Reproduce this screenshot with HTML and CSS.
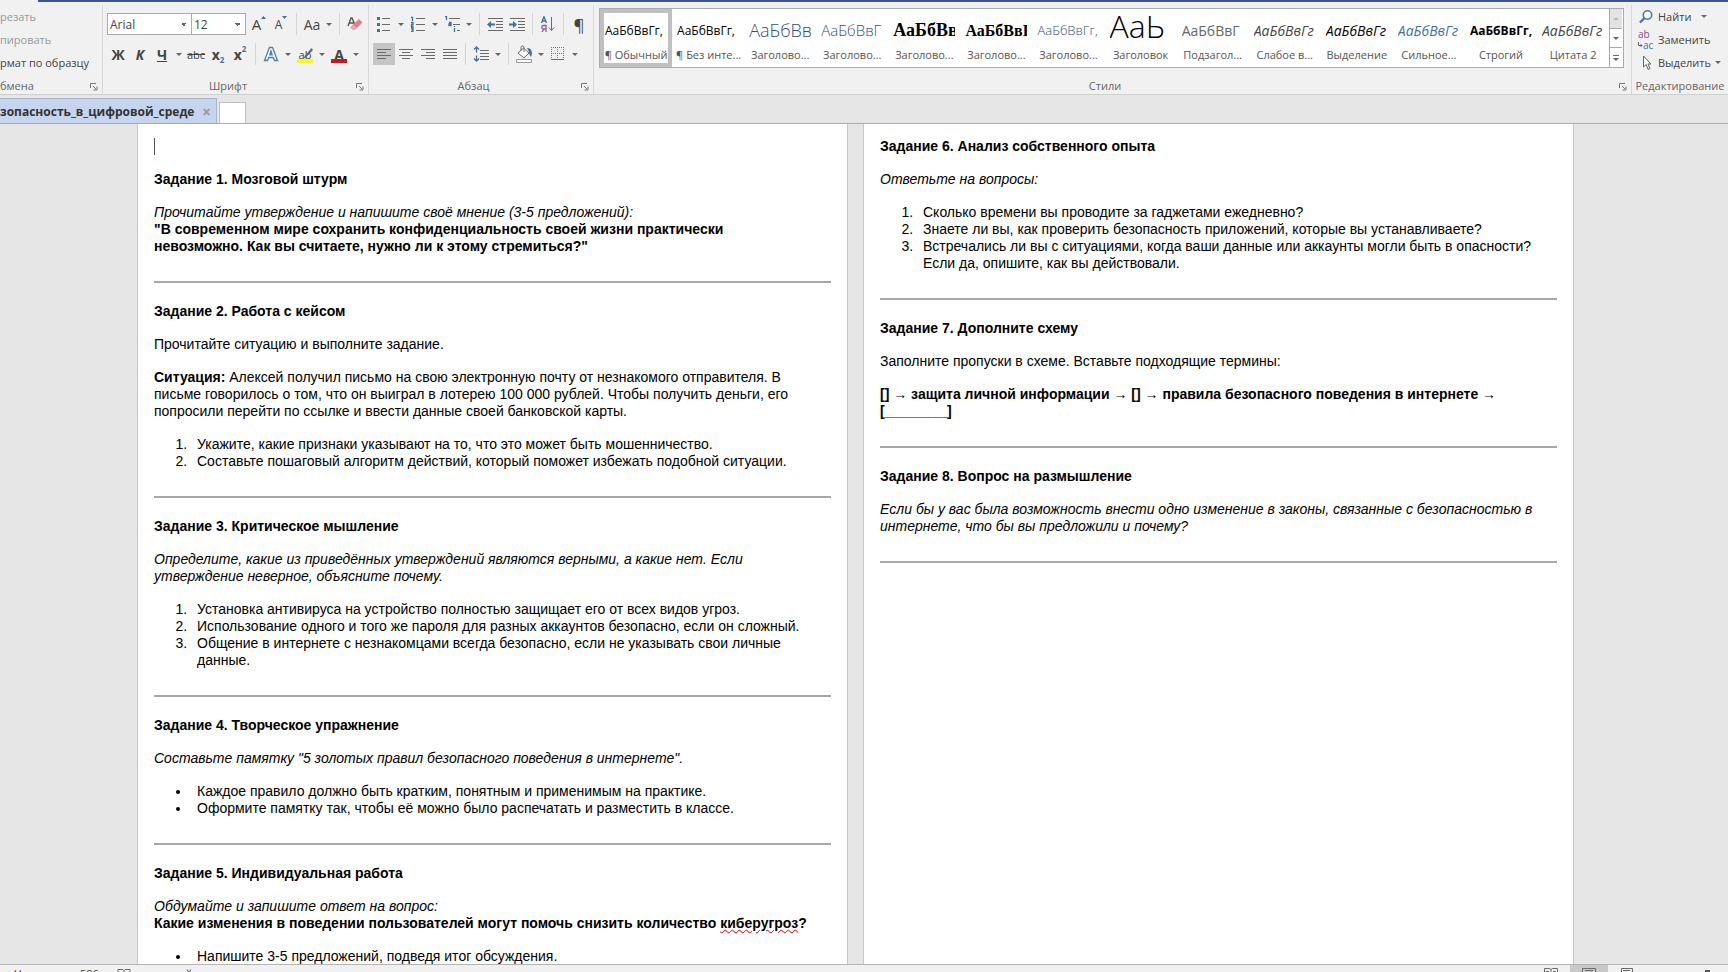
FILE: index.html
```html
<!DOCTYPE html>
<html lang="ru">
<head>
    <meta charset="UTF-8">
    <meta name="viewport" content="width=device-width, initial-scale=1.0">
    <title>Безопасность в цифровой среде</title>
    <link rel="stylesheet" href="styles.css">
</head>
<body>
    <div class="title-edge"></div>

    <header class="ribbon">
        <section class="group clipboard">
            <div class="stack">
                <button class="cmd disabled" disabled>резать</button>
                <button class="cmd disabled" disabled>пировать</button>
                <button class="cmd">рмат по образцу</button>
            </div>
            <div class="group-name left">бмена</div>
            <button class="launcher" aria-label="Буфер обмена"><svg width="8" height="8" viewBox="0 0 8 8"><path d="M.5 5V.5H6M3 3l3 3M7 3.500V7H3.500" /></svg></button>
        </section>

        <section class="group font">
            <div class="rows">
                <div class="row">
                    <select class="pick name" aria-label="Шрифт"><option>Arial</option></select>
                    <select class="pick size" aria-label="Размер"><option>12</option></select>
                    <button class="tool grow" aria-label="Увеличить размер">A<svg width="5" height="3" viewBox="0 0 5 3"><path class="blue-fill" d="M0 3L2.500 0 5 3z" /></svg></button>
                    <button class="tool shrink" aria-label="Уменьшить размер">A<svg width="5" height="3" viewBox="0 0 5 3"><path class="blue-fill" d="M0 0h5L2.500 3z" /></svg></button>
                    <span class="sep"></span>
                    <button class="tool">Aa</button>
                    <button class="arrow" aria-label="Регистр"></button>
                    <span class="sep"></span>
                    <button class="tool" aria-label="Удалить форматирование"><svg width="16" height="16" viewBox="0 0 16 16"><path d="M1 10L4 2h1l3 7M2.500 7h4" fill="none" stroke="#555" stroke-width="1.400" /><path d="M12 3l3.500 3.500-6 6L5.500 9z" fill="#e07f95" /><path d="M5.500 9l4 3.500L8 14H5.500L3 11.500z" fill="#eba5b4" /></svg></button>
                </div>
                <div class="row">
                    <button class="tool strong">Ж</button>
                    <button class="tool strong slant">К</button>
                    <button class="tool strong under">Ч</button>
                    <button class="arrow" aria-label="Подчёркивание"></button>
                    <button class="tool strike">abc</button>
                    <button class="tool strong index">x<sub>2</sub></button>
                    <button class="tool strong index">x<sup>2</sup></button>
                    <span class="sep"></span>
                    <button class="tool" aria-label="Текстовые эффекты"><svg width="16" height="16" viewBox="0 0 16 16"><path d="M1.500 14.500L6.500 1.500h3l5 13h-3l-1.200-3H5.700l-1.200 3zM6.800 8.800h2.400L8 5z" fill="#fff" stroke="#4a7fb5" stroke-width="1.300" /></svg></button>
                    <button class="arrow" aria-label="Эффекты"></button>
                    <button class="tool mark">ab<svg width="16" height="16" viewBox="0 0 16 16"><path d="M0 12h16v4H0z" fill="#fbf528" /><path d="M14.500 1L8 8.500 6 12l3.500-2L16 3z" fill="#6a6a6a" /></svg></button>
                    <button class="arrow" aria-label="Цвет выделения"></button>
                    <button class="tool strong ink">A</button>
                    <button class="arrow" aria-label="Цвет текста"></button>
                </div>
            </div>
            <div class="group-name">Шрифт</div>
            <button class="launcher" aria-label="Параметры шрифта"><svg width="8" height="8" viewBox="0 0 8 8"><path d="M.5 5V.5H6M3 3l3 3M7 3.500V7H3.500" /></svg></button>
        </section>

        <section class="group paragraph">
            <div class="rows">
                <div class="row">
                    <button class="tool" aria-label="Маркеры"><svg width="16" height="16" viewBox="0 0 16 16"><path class="line" d="M6 2.500h8M6 8.500h8M6 14.500h8" /><path class="blue-fill" d="M1 1h3v3H1zM1 7h3v3H1zM1 13h3v3H1z" /></svg></button>
                    <button class="arrow" aria-label="Вид маркеров"></button>
                    <button class="tool" aria-label="Нумерация"><svg width="16" height="16" viewBox="0 0 16 16"><path class="line" d="M6 2.500h9M6 8.500h9M6 14.500h9" /><path class="blue" d="M1 1.500h1.500V5M1 6.500h2v2H1.500v2H3.500M1 12h2v3.500H1M1.500 13.500H3" /></svg></button>
                    <button class="arrow" aria-label="Вид нумерации"></button>
                    <button class="tool" aria-label="Многоуровневый список"><svg width="16" height="16" viewBox="0 0 16 16"><path class="line" d="M5 2.500h11M9 8.500h7M13 14.500h3" /><path class="blue" d="M1 .5h1.500V4M5 6.500h2v3H5v-1.500h2M10.500 12v4M10.500 10v1" /></svg></button>
                    <button class="arrow" aria-label="Вид списка"></button>
                    <span class="sep"></span>
                    <button class="tool" aria-label="Уменьшить отступ"><svg width="16" height="16" viewBox="0 0 16 16"><path class="line" d="M1 2.500h15M9 5.500h7M9 8.500h7M9 11.500h7M1 14.500h15" /><path class="blue-fill" d="M0 8.500L4 5v2.500h4v2H4V12z" /></svg></button>
                    <button class="tool" aria-label="Увеличить отступ"><svg width="16" height="16" viewBox="0 0 16 16"><path class="line" d="M1 2.500h15M9 5.500h7M9 8.500h7M9 11.500h7M1 14.500h15" /><path class="blue-fill" d="M8 8.500L4 5v2.500H0v2h4V12z" /></svg></button>
                    <span class="sep"></span>
                    <button class="tool" aria-label="Сортировка"><svg width="16" height="16" viewBox="0 0 16 16"><path class="blue" d="M1.500 7L4 .5 6.500 7M2.500 5h3" /><path d="M6 16V9.500H3.500a1.500 1.500 0 000 3.500H6M4 13l-2 3" fill="none" stroke="#8d5ba0" stroke-width="1.300" /><path class="line" d="M11.500 1v13M9 11.500l2.500 3 2.500-3" /></svg></button>
                    <span class="sep"></span>
                    <button class="tool pilcrow">¶</button>
                </div>
                <div class="row">
                    <button class="tool on" aria-label="По левому краю"><svg width="16" height="16" viewBox="0 0 16 16"><path class="line" d="M1 3.500h14M1 6.500h9M1 9.500h14M1 12.500h9" /></svg></button>
                    <button class="tool" aria-label="По центру"><svg width="16" height="16" viewBox="0 0 16 16"><path class="line" d="M1 3.500h14M4 6.500h8M1 9.500h14M4 12.500h8" /></svg></button>
                    <button class="tool" aria-label="По правому краю"><svg width="16" height="16" viewBox="0 0 16 16"><path class="line" d="M1 3.500h14M6 6.500h9M1 9.500h14M6 12.500h9" /></svg></button>
                    <button class="tool" aria-label="По ширине"><svg width="16" height="16" viewBox="0 0 16 16"><path class="line" d="M1 3.500h14M1 6.500h14M1 9.500h14M1 12.500h14" /></svg></button>
                    <span class="sep"></span>
                    <button class="tool" aria-label="Интервал"><svg width="16" height="16" viewBox="0 0 16 16"><path class="line" d="M7 4.500h9M7 7.500h9M7 10.500h9M7 13.500h9" /><path class="blue" d="M3.500 1v5.500M1 3.500L3.500 1 6 3.500M3.500 9.500V15M1 12.500L3.500 15 6 12.500" /></svg></button>
                    <button class="arrow" aria-label="Выбор интервала"></button>
                    <span class="sep"></span>
                    <button class="tool" aria-label="Заливка"><svg width="18" height="18" viewBox="0 0 18 18"><path d="M3 8l5.500-5L14 8l-5 5z" fill="#fff" stroke="#666" /><path class="line" d="M6 6V2.500a1.500 1.500 0 013 0V7" /><path class="blue-fill" d="M12 3c5 0 6 5 4 9-1-1-2-3-2-5z" /><path d="M1.500 14.500h15v3h-15z" fill="#fff" stroke="#999" /></svg></button>
                    <button class="arrow" aria-label="Цвет заливки"></button>
                    <button class="tool" aria-label="Границы"><svg width="14" height="14" viewBox="0 0 14 14"><path d="M.5 0v13M6.500 0v13M12.500 0v13M0 .5h13M0 6.500h13" fill="none" stroke="#777" stroke-dasharray="1 1" /><path class="line" d="M0 12.500h13" /></svg></button>
                    <button class="arrow" aria-label="Вид границ"></button>
                </div>
            </div>
            <div class="group-name">Абзац</div>
            <button class="launcher" aria-label="Параметры абзаца"><svg width="8" height="8" viewBox="0 0 8 8"><path d="M.5 5V.5H6M3 3l3 3M7 3.500V7H3.500" /></svg></button>
        </section>

        <section class="group styles">
            <div class="gallery">
                <button class="style chosen"><span class="sample">АаБбВвГг,</span><span class="caption">¶ Обычный</span></button>
                <button class="style"><span class="sample">АаБбВвГг,</span><span class="caption">¶ Без инте...</span></button>
                <button class="style"><span class="sample h1">АаБбВв</span><span class="caption">Заголово...</span></button>
                <button class="style"><span class="sample h2">АаБбВвГ</span><span class="caption">Заголово...</span></button>
                <button class="style"><span class="sample h3">АаБбВв</span><span class="caption">Заголово...</span></button>
                <button class="style"><span class="sample h4">АаБбВвГ</span><span class="caption">Заголово...</span></button>
                <button class="style"><span class="sample h5">АаБбВвГг,</span><span class="caption">Заголово...</span></button>
                <button class="style"><span class="sample title">АаЬ</span><span class="caption">Заголовок</span></button>
                <button class="style"><span class="sample subtitle">АаБбВвГ</span><span class="caption">Подзагол...</span></button>
                <button class="style"><span class="sample weak">АаБбВвГг</span><span class="caption">Слабое в...</span></button>
                <button class="style"><span class="sample accent">АаБбВвГг</span><span class="caption">Выделение</span></button>
                <button class="style"><span class="sample intense">АаБбВвГг</span><span class="caption">Сильное...</span></button>
                <button class="style"><span class="sample strong">АаБбВвГг,</span><span class="caption">Строгий</span></button>
                <button class="style"><span class="sample weak">АаБбВвГг</span><span class="caption">Цитата 2</span></button>
                <div class="scroller">
                    <button class="arrow up" aria-label="Вверх"></button>
                    <button class="arrow" aria-label="Вниз"></button>
                    <button class="arrow more" aria-label="Все стили"></button>
                </div>
            </div>
            <div class="group-name">Стили</div>
            <button class="launcher" aria-label="Окно стилей"><svg width="8" height="8" viewBox="0 0 8 8"><path d="M.5 5V.5H6M3 3l3 3M7 3.500V7H3.500" /></svg></button>
        </section>

        <section class="group editing">
            <div class="stack">
                <button class="cmd"><svg width="16" height="16" viewBox="0 0 16 16"><circle cx="9.500" cy="6" r="4.200" fill="#fff" stroke="#4a78a8" stroke-width="1.600" /><path d="M6.500 9L2 13.500" stroke="#4a78a8" stroke-width="2.400" /></svg>Найти<span class="mini far"></span></button>
                <button class="cmd"><span class="swap"><span>ab</span><span class="to"><svg width="5" height="6" viewBox="0 0 5 6"><path d="M.5 0v3.500H4M2.500 2L4 3.500 2.500 5" fill="none" stroke="#666" /></svg>ac</span></span>Заменить</button>
                <button class="cmd"><svg width="16" height="16" viewBox="0 0 16 16"><path d="M5.500 1v11l2.700-2.500 2 5 1.800-.8-2-4.700h3z" fill="#fff" stroke="#666" /></svg>Выделить<span class="mini"></span></button>
            </div>
            <div class="group-name">Редактирование</div>
        </section>
    </header>

    <nav class="tabs">
        <a class="tab" href="#doc">зопасность_в_цифровой_среде<span class="close">✕</span></a>
        <a class="tab-new" href="#new" aria-label="Новая вкладка"></a>
    </nav>

    <main class="workspace" id="doc">
        <article class="page">
            <p><span class="cursor"></span></p>

            <h2>Задание 1. Мозговой штурм</h2>
            <p><i>Прочитайте утверждение и напишите своё мнение (3-5 предложений):</i><br>
            <b>"В современном мире сохранить конфиденциальность своей жизни практически<br>невозможно. Как вы считаете, нужно ли к этому стремиться?"</b></p>
            <hr>

            <h2>Задание 2. Работа с кейсом</h2>
            <p>Прочитайте ситуацию и выполните задание.</p>
            <p><b>Ситуация:</b> Алексей получил письмо на свою электронную почту от незнакомого отправителя. В<br>письме говорилось о том, что он выиграл в лотерею 100 000 рублей. Чтобы получить деньги, его<br>попросили перейти по ссылке и ввести данные своей банковской карты.</p>
            <ol>
                <li>Укажите, какие признаки указывают на то, что это может быть мошенничество.</li>
                <li>Составьте пошаговый алгоритм действий, который поможет избежать подобной ситуации.</li>
            </ol>
            <hr>

            <h2>Задание 3. Критическое мышление</h2>
            <p><i>Определите, какие из приведённых утверждений являются верными, а какие нет. Если<br>утверждение неверное, объясните почему.</i></p>
            <ol>
                <li>Установка антивируса на устройство полностью защищает его от всех видов угроз.</li>
                <li>Использование одного и того же пароля для разных аккаунтов безопасно, если он сложный.</li>
                <li>Общение в интернете с незнакомцами всегда безопасно, если не указывать свои личные<br>данные.</li>
            </ol>
            <hr>

            <h2>Задание 4. Творческое упражнение</h2>
            <p><i>Составьте памятку "5 золотых правил безопасного поведения в интернете".</i></p>
            <ul>
                <li>Каждое правило должно быть кратким, понятным и применимым на практике.</li>
                <li>Оформите памятку так, чтобы её можно было распечатать и разместить в классе.</li>
            </ul>
            <hr>

            <h2>Задание 5. Индивидуальная работа</h2>
            <p><i>Обдумайте и запишите ответ на вопрос:</i><br>
            <b>Какие изменения в поведении пользователей могут помочь снизить количество <span class="typo">киберугроз</span>?</b></p>
            <ul>
                <li>Напишите 3-5 предложений, подведя итог обсуждения.</li>
            </ul>
        </article>

        <article class="page">
            <h2>Задание 6. Анализ собственного опыта</h2>
            <p><i>Ответьте на вопросы:</i></p>
            <ol>
                <li>Сколько времени вы проводите за гаджетами ежедневно?</li>
                <li>Знаете ли вы, как проверить безопасность приложений, которые вы устанавливаете?</li>
                <li>Встречались ли вы с ситуациями, когда ваши данные или аккаунты могли быть в опасности?<br>Если да, опишите, как вы действовали.</li>
            </ol>
            <hr>

            <h2>Задание 7. Дополните схему</h2>
            <p>Заполните пропуски в схеме. Вставьте подходящие термины:</p>
            <p><b>[] → защита личной информации → [] → правила безопасного поведения в интернете →<br>[________]</b></p>
            <hr>

            <h2>Задание 8. Вопрос на размышление</h2>
            <p><i>Если бы у вас была возможность внести одно изменение в законы, связанные с безопасностью в<br>интернете, что бы вы предложили и почему?</i></p>
            <hr>
        </article>
    </main>

    <footer class="status">
        <span>Число слов: 586</span>
        <svg width="15" height="12" viewBox="0 0 15 12"><path class="line" d="M1 10V1.500h5l1 1 1-1h5V10M7 2.500V10" /></svg>
        <span>русский</span>
        <div class="views">
            <button class="view" aria-label="Режим чтения"><svg width="14" height="12" viewBox="0 0 14 12"><path class="line" d="M.5 10V1.500h5l1.500 1 1.500-1h5V10M7 2.500V10M2 4.500h3M9 4.500h3" /></svg></button>
            <button class="view on" aria-label="Разметка страницы"><svg width="14" height="12" viewBox="0 0 14 12"><path class="line" d="M.5 11V1.500h13V11M3 3.500h8" /></svg></button>
            <button class="view" aria-label="Веб-документ"><svg width="14" height="12" viewBox="0 0 14 12"><path class="line" d="M1.500 11V1.500h11V11M3 3.500h7" /></svg></button>
        </div>
        <span class="thumb"></span>
    </footer>
</body>
</html>
```
FILE: styles.css
```css
* {
    box-sizing: border-box;
}
body {
    margin: 0;
    height: 100vh;
    display: flex;
    flex-direction: column;
    overflow: hidden;
    font-family: "Open Sans", "Noto Sans", sans-serif;
    font-size: 12px;
    color: #444;
    background-color: #f1f1f1;
}
button {
    padding: 0;
    border: none;
    background: none;
    font: inherit;
    color: inherit;
}
svg {
    display: block;
    flex: none;
}
.line {
    fill: none;
    stroke: #6a6a6a;
}
.blue {
    fill: none;
    stroke: #41719c;
    stroke-width: 1.3;
}
.blue-fill {
    fill: #41719c;
}
.title-edge {
    flex: none;
    height: 2px;
    margin-left: 38px;
    background-color: #3b5590;
}

/* Ribbon */
.ribbon {
    flex: none;
    display: flex;
    height: 93px;
    padding-top: 3px;
    border-bottom: 1px solid #d0d0d0;
}
.group {
    position: relative;
    display: flex;
    flex-direction: column;
    justify-content: space-between;
    border-right: 1px solid #d8d8d8;
}
.clipboard {
    width: 103px;
}
.font {
    width: 266px;
}
.paragraph {
    width: 225px;
}
.styles {
    flex: 1;
    min-width: 0;
}
.editing {
    width: 96px;
    border-right: none;
}
.group-name {
    padding-right: 15px;
    font-size: 11px;
    line-height: 16px;
    text-align: center;
    color: #666;
    white-space: nowrap;
}
.group-name.left {
    text-align: left;
}
.editing .group-name {
    padding-right: 0;
}
.launcher {
    position: absolute;
    right: 4px;
    bottom: 3px;
}
.launcher path {
    fill: none;
    stroke: #777;
}
.rows {
    display: flex;
    flex-direction: column;
    gap: 8px;
    padding: 8px 0 0 4px;
}
.row {
    display: flex;
    align-items: center;
    height: 22px;
}
.tool {
    position: relative;
    display: flex;
    align-items: center;
    justify-content: center;
    width: 22px;
    height: 22px;
    font-size: 14px;
}
.tool.on {
    background-color: #c5c5c5;
}
.arrow {
    display: flex;
    align-items: center;
    justify-content: center;
    width: 12px;
    height: 22px;
}
.arrow::before,
.mini {
    content: "";
    border: 3px solid transparent;
    border-top-color: #666;
    border-bottom: none;
}
.sep {
    width: 1px;
    height: 22px;
    margin: 0 4px;
    background-color: #d5d5d5;
}
.pick {
    height: 22px;
    padding: 0 2px;
    border: 1px solid #ababab;
    border-radius: 0;
    appearance: none;
    font: inherit;
    color: #444;
    background-color: #fff;
    background-image: linear-gradient(45deg, transparent 50%, #666 50%), linear-gradient(135deg, #666 50%, transparent 50%);
    background-repeat: no-repeat;
    background-position: right 7px center, right 4px center;
    background-size: 3px 3px;
}
.pick.name {
    width: 85px;
}
.pick.size {
    width: 55px;
    margin: 0 2px 0 -1px;
}
.grow svg,
.shrink svg {
    align-self: flex-start;
    margin-top: 3px;
}
.grow {
    font-size: 15px;
}
.shrink {
    font-size: 12px;
}
.strong {
    font-weight: bold;
}
.slant {
    font-style: italic;
}
.under {
    text-decoration: underline;
}
.strike {
    font-size: 11px;
    text-decoration: line-through;
}
.index sub,
.index sup {
    font-size: 8px;
    color: #41719c;
}
.index sub {
    align-self: flex-end;
}
.index sup {
    align-self: flex-start;
}
.mark {
    font-size: 11px;
}
.mark svg {
    position: absolute;
    left: 3px;
    top: 4px;
}
.ink::after {
    content: "";
    position: absolute;
    left: 3px;
    bottom: 2px;
    width: 16px;
    height: 4px;
    background-color: #c8141e;
}
.pilcrow {
    font-size: 17px;
}

/* Styles gallery */
.gallery {
    display: flex;
    height: 60px;
    margin: 3px 7px 0 5px;
    border: 1px solid #ababab;
    background-color: #fff;
}
.style {
    flex: 1;
    min-width: 0;
    display: flex;
    flex-direction: column;
    justify-content: space-between;
    border: 4px solid transparent;
}
.style.chosen {
    border-color: #c0c0c0;
}
.sample {
    height: 33px;
    margin: 0 1px;
    line-height: 35px;
    overflow: hidden;
    text-align: left;
    white-space: nowrap;
    color: #000;
}
.caption {
    font-size: 11px;
    line-height: 17px;
    text-align: center;
    white-space: nowrap;
    color: #555;
}
.h1,
.h2,
.h5 {
    font-weight: 300;
    color: #34507c;
}
.h1 {
    font-size: 18px;
}
.h2 {
    font-size: 15px;
}
.h3,
.h4 {
    font-family: "Liberation Serif", serif;
    font-weight: bold;
}
.h3 {
    font-size: 18px;
}
.h4 {
    font-size: 16px;
}
.h5 {
    font-size: 13px;
}
.title {
    font-size: 32px;
    line-height: 26px;
    font-weight: 300;
}
.subtitle {
    font-size: 14px;
    color: #666;
}
.weak,
.accent,
.intense {
    font-size: 14px;
    font-style: italic;
}
.weak {
    color: #444;
}
.intense {
    color: #41719c;
}
.scroller {
    display: flex;
    flex-direction: column;
    width: 14px;
    border-left: 1px solid #ababab;
}
.scroller .arrow {
    flex: 1;
    flex-direction: column;
    gap: 2px;
}
.scroller .arrow + .arrow {
    border-top: 1px solid #ababab;
}
.scroller .up {
    background-color: #e3e3e3;
}
.up::before {
    transform: rotate(180deg);
    border-top-color: #bbb;
}
.more::after {
    content: "";
    order: -1;
    width: 6px;
    height: 1px;
    background-color: #666;
}

/* Stacked commands */
.stack {
    display: flex;
    flex-direction: column;
}
.cmd {
    display: flex;
    align-items: center;
    gap: 4px;
    height: 23px;
    font-size: 11px;
    white-space: nowrap;
}
.cmd.disabled {
    color: #999;
}
.editing .cmd {
    padding-left: 6px;
}
.mini.far {
    margin-left: 6px;
}
.swap {
    display: flex;
    flex-direction: column;
    width: 16px;
    font-size: 10px;
    line-height: 11px;
    color: #7a4f8f;
    text-align: left;
}
.swap .to {
    display: flex;
    align-items: center;
    color: #41719c;
}

/* Document tabs */
.tabs {
    flex: none;
    display: flex;
    align-items: flex-end;
    gap: 2px;
    height: 29px;
    border-bottom: 1px solid #ababab;
    background-color: #e6e6e6;
}
.tab {
    display: flex;
    align-items: center;
    justify-content: space-between;
    width: 217px;
    height: 25px;
    padding-right: 5px;
    border: 1px solid #aab4c8;
    border-width: 1px 1px 0 0;
    font-weight: bold;
    color: #333;
    text-decoration: none;
    background-color: #c6d4ee;
}
.close {
    font-size: 11px;
    color: #999;
}
.tab-new {
    width: 27px;
    height: 21px;
    border: 1px solid #c0c0c0;
    border-bottom: none;
    background-color: #fff;
}

/* Pages */
.workspace {
    flex: 1;
    min-height: 0;
    display: flex;
    gap: 15px;
    padding-left: 137px;
    overflow: hidden;
    background-color: #e6e6e6;
}
.page {
    flex: none;
    width: 711px;
    min-height: 100%;
    padding: 14px 16px 0;
    border: 1px solid #c6c6c6;
    border-width: 0 1px;
    font-family: "Liberation Sans", Arial, sans-serif;
    font-size: 14px;
    line-height: 17px;
    color: #000;
    background-color: #fff;
}
.page h2,
.page p,
.page ol,
.page ul {
    margin: 0 0 16px;
    font-size: 14px;
    min-height: 17px;
}
.page ol,
.page ul {
    padding-left: 37px;
}
.page li {
    padding-left: 6px;
}
.page hr {
    height: 2px;
    margin: 26px 0 20px;
    border: none;
    background-color: #a8a8a8;
}
.cursor {
    display: block;
    width: 1px;
    height: 17px;
    background-color: #555;
}
.typo {
    text-decoration: underline wavy #d00 1px;
}

/* Status bar */
.status {
    flex: none;
    display: flex;
    align-items: flex-start;
    height: 8px;
    padding: 1px 18px 0 14px;
    border-top: 1px solid #b4b4b4;
    font-size: 11px;
    line-height: 16px;
    overflow: hidden;
}
.status svg {
    margin: 2px 18px 0;
}
.views {
    display: flex;
    margin-left: auto;
}
.view {
    width: 38px;
    margin-top: -1px;
}
.status .view svg {
    margin: 2px 12px 0;
}
.view.on {
    background-color: #c8c8c8;
}
.thumb {
    width: 5px;
    height: 10px;
    margin: 4px 0 0 59px;
    background-color: #555;
}
```
